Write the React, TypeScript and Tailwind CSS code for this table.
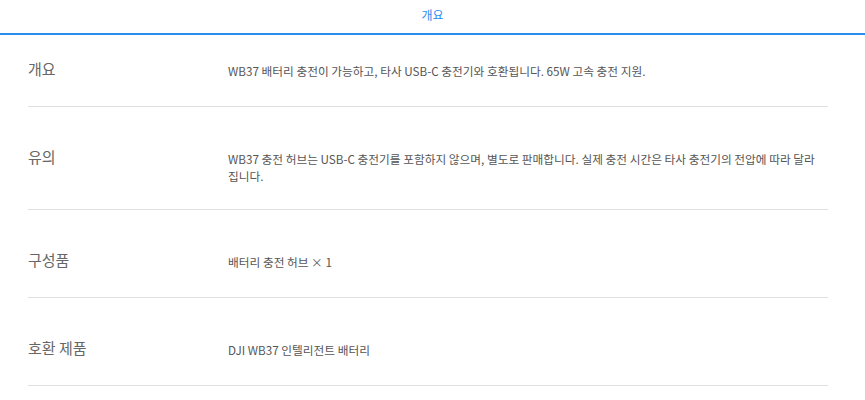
export default function App() {
  const font = { fontFamily: '"Noto Sans CJK KR", "Noto Sans", sans-serif' };
  return (
    <div className="w-full bg-white" style={font}>
      <div className="flex h-[35px] items-center justify-center border-b-2 border-[#2a8ef0] pb-[4px]">
        <span className="text-[12px] leading-none text-[#2a8ef0]">개요</span>
      </div>
      <div className="ml-[28px] w-[800px]">
        <Row label="개요" pt="pt-[22px]">
          WB37 배터리 충전이 가능하고, 타사 USB-C 충전기와 호환됩니다. 65W 고속 충전 지원.
        </Row>
        <Row label="유의" pt="pt-[38px]">
          WB37 충전 허브는 USB-C 충전기를 포함하지 않으며, 별도로 판매합니다. 실제 충전 시간은 타사 충전기의 전압에 따라 달라 집니다.
        </Row>
        <Row label="구성품" pt="pt-[38px]">
          배터리 충전 허브 × 1
        </Row>
        <Row label="호환 제품" pt="pt-[38px]">
          DJI WB37 인텔리전트 배터리
        </Row>
      </div>
    </div>
  );
}

function Row({ label, pt, children }: { label: string; pt: string; children: React.ReactNode }) {
  return (
    <div className={`flex border-b border-[#e0e0e0] pb-[25px] ${pt}`}>
      <div className="w-[200px] shrink-0 text-[15px] leading-[24px] text-[#666]">{label}</div>
      <div className="w-[590px] pt-[6px] text-[11.7px] leading-[16.5px] text-[#555]">{children}</div>
    </div>
  );
}
